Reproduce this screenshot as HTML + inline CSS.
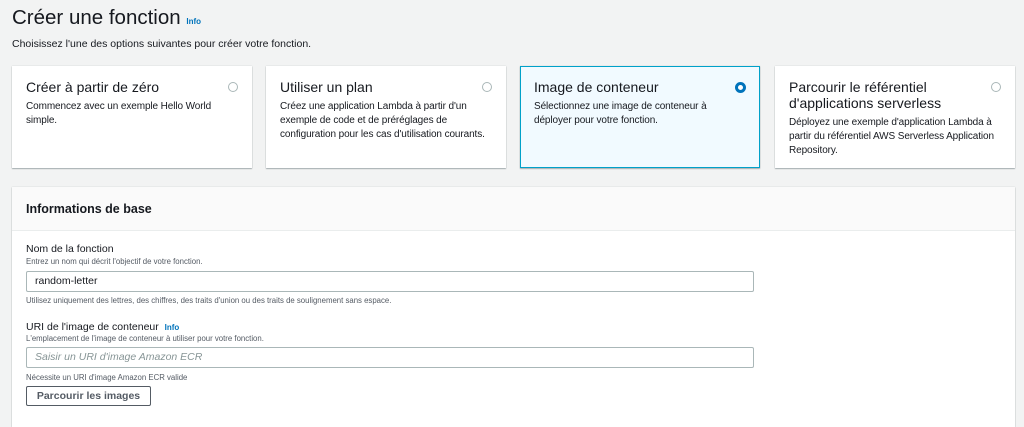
<!DOCTYPE html>
<html><head><meta charset="utf-8"><style>
*{box-sizing:border-box;margin:0;padding:0}
body{width:1024px;height:419px;overflow:hidden;background:#f2f3f3;font-family:"Liberation Sans",sans-serif;color:#16191f;position:relative}
.abs{position:absolute}
.info{color:#0073bb;font-weight:bold;font-size:8px}
.card{position:absolute;top:66px;width:240px;height:102px;background:#fff;box-shadow:0 1px 1px rgba(0,28,36,.3),0 0 1px rgba(0,28,36,.2);padding:13px 14px}
.card h3{font-weight:normal;font-size:14px;line-height:16px;width:190px}
.card p{font-size:10px;line-height:14px;margin-top:5px;white-space:nowrap;letter-spacing:-0.1px}
.radio{position:absolute;right:14px;top:16px;width:10px;height:10px;border-radius:50%;border:1px solid #aab7b8;background:#fff}
.sel{background:#f1faff;border:1px solid #00a1c9;padding:12px 13px}
.sel .radio{border:3px solid #0073bb;width:11px;height:11px;right:13px;top:15px}
.panel{position:absolute;left:12px;top:187px;width:1003px;height:240px;background:#fff;box-shadow:0 1px 1px rgba(0,28,36,.3),0 0 1px rgba(0,28,36,.2)}
.ph{height:44px;background:#fafafa;border-bottom:1px solid #eaeded;padding:15px 14px;font-weight:bold;font-size:12.5px}
.lbl{font-size:10.5px}
.hlp{font-size:7.8px;color:#545b64}
.inp{position:absolute;left:26px;width:728px;height:21px;border:1px solid #aab7b8;border-radius:2px;background:#fff;font-size:10.5px;padding:3px 8px}
</style></head><body>
<div class="abs" style="left:12px;top:6px;font-size:20.5px">Créer une fonction <span class="info">Info</span></div>
<div class="abs" style="left:12px;top:38px;font-size:10.5px">Choisissez l'une des options suivantes pour créer votre fonction.</div>
<div class="card" style="left:12px"><h3>Créer à partir de zéro</h3><p>Commencez avec un exemple Hello World<br>simple.</p><div class="radio"></div></div>
<div class="card" style="left:266px"><h3>Utiliser un plan</h3><p>Créez une application Lambda à partir d'un<br>exemple de code et de préréglages de<br>configuration pour les cas d'utilisation courants.</p><div class="radio"></div></div>
<div class="card sel" style="left:520px"><h3>Image de conteneur</h3><p>Sélectionnez une image de conteneur à<br>déployer pour votre fonction.</p><div class="radio"></div></div>
<div class="card" style="left:775px"><h3>Parcourir le référentiel d'applications serverless</h3><p>Déployez une exemple d'application Lambda à<br>partir du référentiel AWS Serverless Application<br>Repository.</p><div class="radio"></div></div>
<div class="panel"><div class="ph">Informations de base</div></div>
<div class="abs lbl" style="left:26px;top:243px">Nom de la fonction</div>
<div class="abs hlp" style="left:26px;top:257px">Entrez un nom qui décrit l'objectif de votre fonction.</div>
<div class="inp" style="top:271px">random-letter</div>
<div class="abs hlp" style="left:26px;top:296px">Utilisez uniquement des lettres, des chiffres, des traits d'union ou des traits de soulignement sans espace.</div>
<div class="abs lbl" style="left:26px;top:321px">URI de l'image de conteneur &nbsp;<span class="info">Info</span></div>
<div class="abs hlp" style="left:26px;top:334px">L'emplacement de l'image de conteneur à utiliser pour votre fonction.</div>
<div class="inp" style="top:347px;color:#879596;font-style:italic">Saisir un URI d'image Amazon ECR</div>
<div class="abs hlp" style="left:26px;top:373px">Nécessite un URI d'image Amazon ECR valide</div>
<div class="abs" style="left:26px;top:386px;width:125px;height:20px;border:1px solid #545b64;border-radius:2px;background:#fff;font-size:10.5px;font-weight:bold;text-align:center;line-height:18px;color:#545b64">Parcourir les images</div>
</body></html>
